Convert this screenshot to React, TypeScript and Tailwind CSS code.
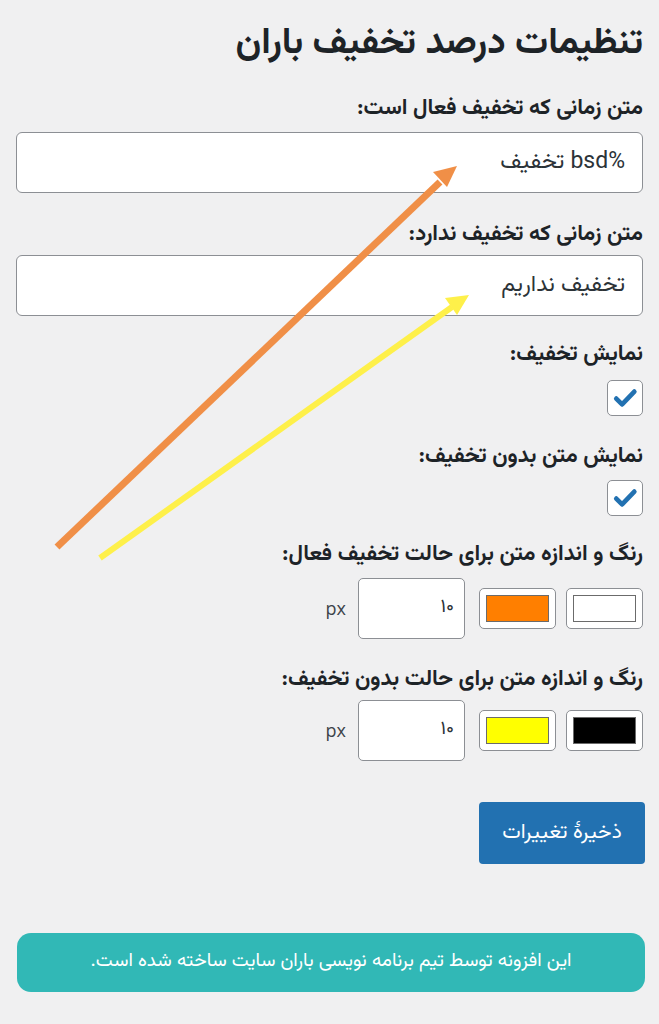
import React from 'react';

const font = { fontFamily: '"Vazirmatn", "Noto Sans Arabic", "DejaVu Sans", sans-serif' };

const Check: React.FC = () => (
  <div className="w-[36px] h-[36px] rounded-[5px] border border-[#8c8f94] bg-white flex items-center justify-center">
    <svg viewBox="0 0 24 24" className="w-[28px] h-[28px]">
      <path d="M4.5 12.5l5 5L20 6.5" fill="none" stroke="#2271b1" strokeWidth="4" strokeLinecap="round" strokeLinejoin="round" />
    </svg>
  </div>
);

const Swatch: React.FC<{ color: string }> = ({ color }) => (
  <div className="w-[77px] h-[41px] rounded-[5px] border border-[#8c8f94] bg-white p-[6px]">
    <div className="w-full h-full border border-[#6b6b6b]" style={{ backgroundColor: color }} />
  </div>
);

const Label: React.FC<{ children: React.ReactNode }> = ({ children }) => (
  <div className="text-[22px] font-bold text-[#1d2327] leading-[30px]">{children}</div>
);

const ColorRow: React.FC<{ label: string; a: string; b: string; top: string; gap: string }> = ({ label, a, b, top, gap }) => (
  <div className={top}>
    <Label>{label}</Label>
    <div className={`flex items-center gap-[10px] ${gap}`}>
      <Swatch color={a} />
      <Swatch color={b} />
      <div className="w-[107px] h-[61px] mr-[4px] rounded-[5px] border border-[#8c8f94] bg-white flex items-center px-[10px] text-[19px] text-[#2c3338]">
        ۱۰
      </div>
      <span className="mr-[2px] text-[18px] text-[#3c434a]" style={{ fontFamily: '"Open Sans", sans-serif' }}>px</span>
    </div>
  </div>
);

const Field: React.FC<{ value: string }> = ({ value }) => (
  <div className="h-[61px] rounded-[6px] border border-[#8c8f94] bg-white flex items-center px-[17px] text-[23px] text-[#2c3338]">
    {value}
  </div>
);

export default function App() {
  return (
    <div dir="rtl" className="relative w-[659px] h-[1024px] bg-[#f0f0f1] overflow-hidden" style={font}>
      <div className="pr-[16px] pl-[16px]">
        <h1 className="pt-[20px] text-[37px] font-bold text-[#1d2327] leading-[48px]">تنظیمات درصد تخفیف باران</h1>
        <div className="mt-[26px]">
          <Label>متن زمانی که تخفیف فعال است:</Label>
          <div className="mt-[8px]"><Field value="%bsd تخفیف" /></div>
        </div>
        <div className="mt-[27px]">
          <Label>متن زمانی که تخفیف ندارد:</Label>
          <div className="mt-[5px]"><Field value="تخفیف نداریم" /></div>
        </div>
        <div className="mt-[24px]">
          <Label>نمایش تخفیف:</Label>
          <div className="mt-[10px]"><Check /></div>
        </div>
        <div className="mt-[26px]">
          <Label>نمایش متن بدون تخفیف:</Label>
          <div className="mt-[8px]"><Check /></div>
        </div>
        <ColorRow top="mt-[24px]" gap="mt-[8px]" label="رنگ و اندازه متن برای حالت تخفیف فعال:" a="#ffffff" b="#ff7f00" />
        <ColorRow top="mt-[26px]" gap="mt-[5px]" label="رنگ و اندازه متن برای حالت بدون تخفیف:" a="#000000" b="#ffff00" />
        <button className="mt-[41px] -mr-[2px] w-[166px] h-[62px] rounded-[4px] bg-[#2271b1] text-white text-[21px]">
          ذخیرهٔ تغییرات
        </button>
        <div className="mt-[69px] -mr-[2px] ml-[1px] h-[59px] rounded-[14px] bg-[#31b8b6] flex items-center justify-center text-white text-[19px]">
          این افزونه توسط تیم برنامه نویسی باران سایت ساخته شده است.
        </div>
      </div>
      <svg className="absolute inset-0 pointer-events-none" width="659" height="1024" viewBox="0 0 659 1024">
        <line x1="57" y1="547" x2="440" y2="182" stroke="#f08f47" strokeWidth="7" />
        <polygon points="457,166 433,172 447,187" fill="#f08f47" />
        <line x1="100" y1="558" x2="452" y2="307" stroke="#fef04a" strokeWidth="6" />
        <polygon points="469,295 445,298 457,315" fill="#fef04a" />
      </svg>
    </div>
  );
}
